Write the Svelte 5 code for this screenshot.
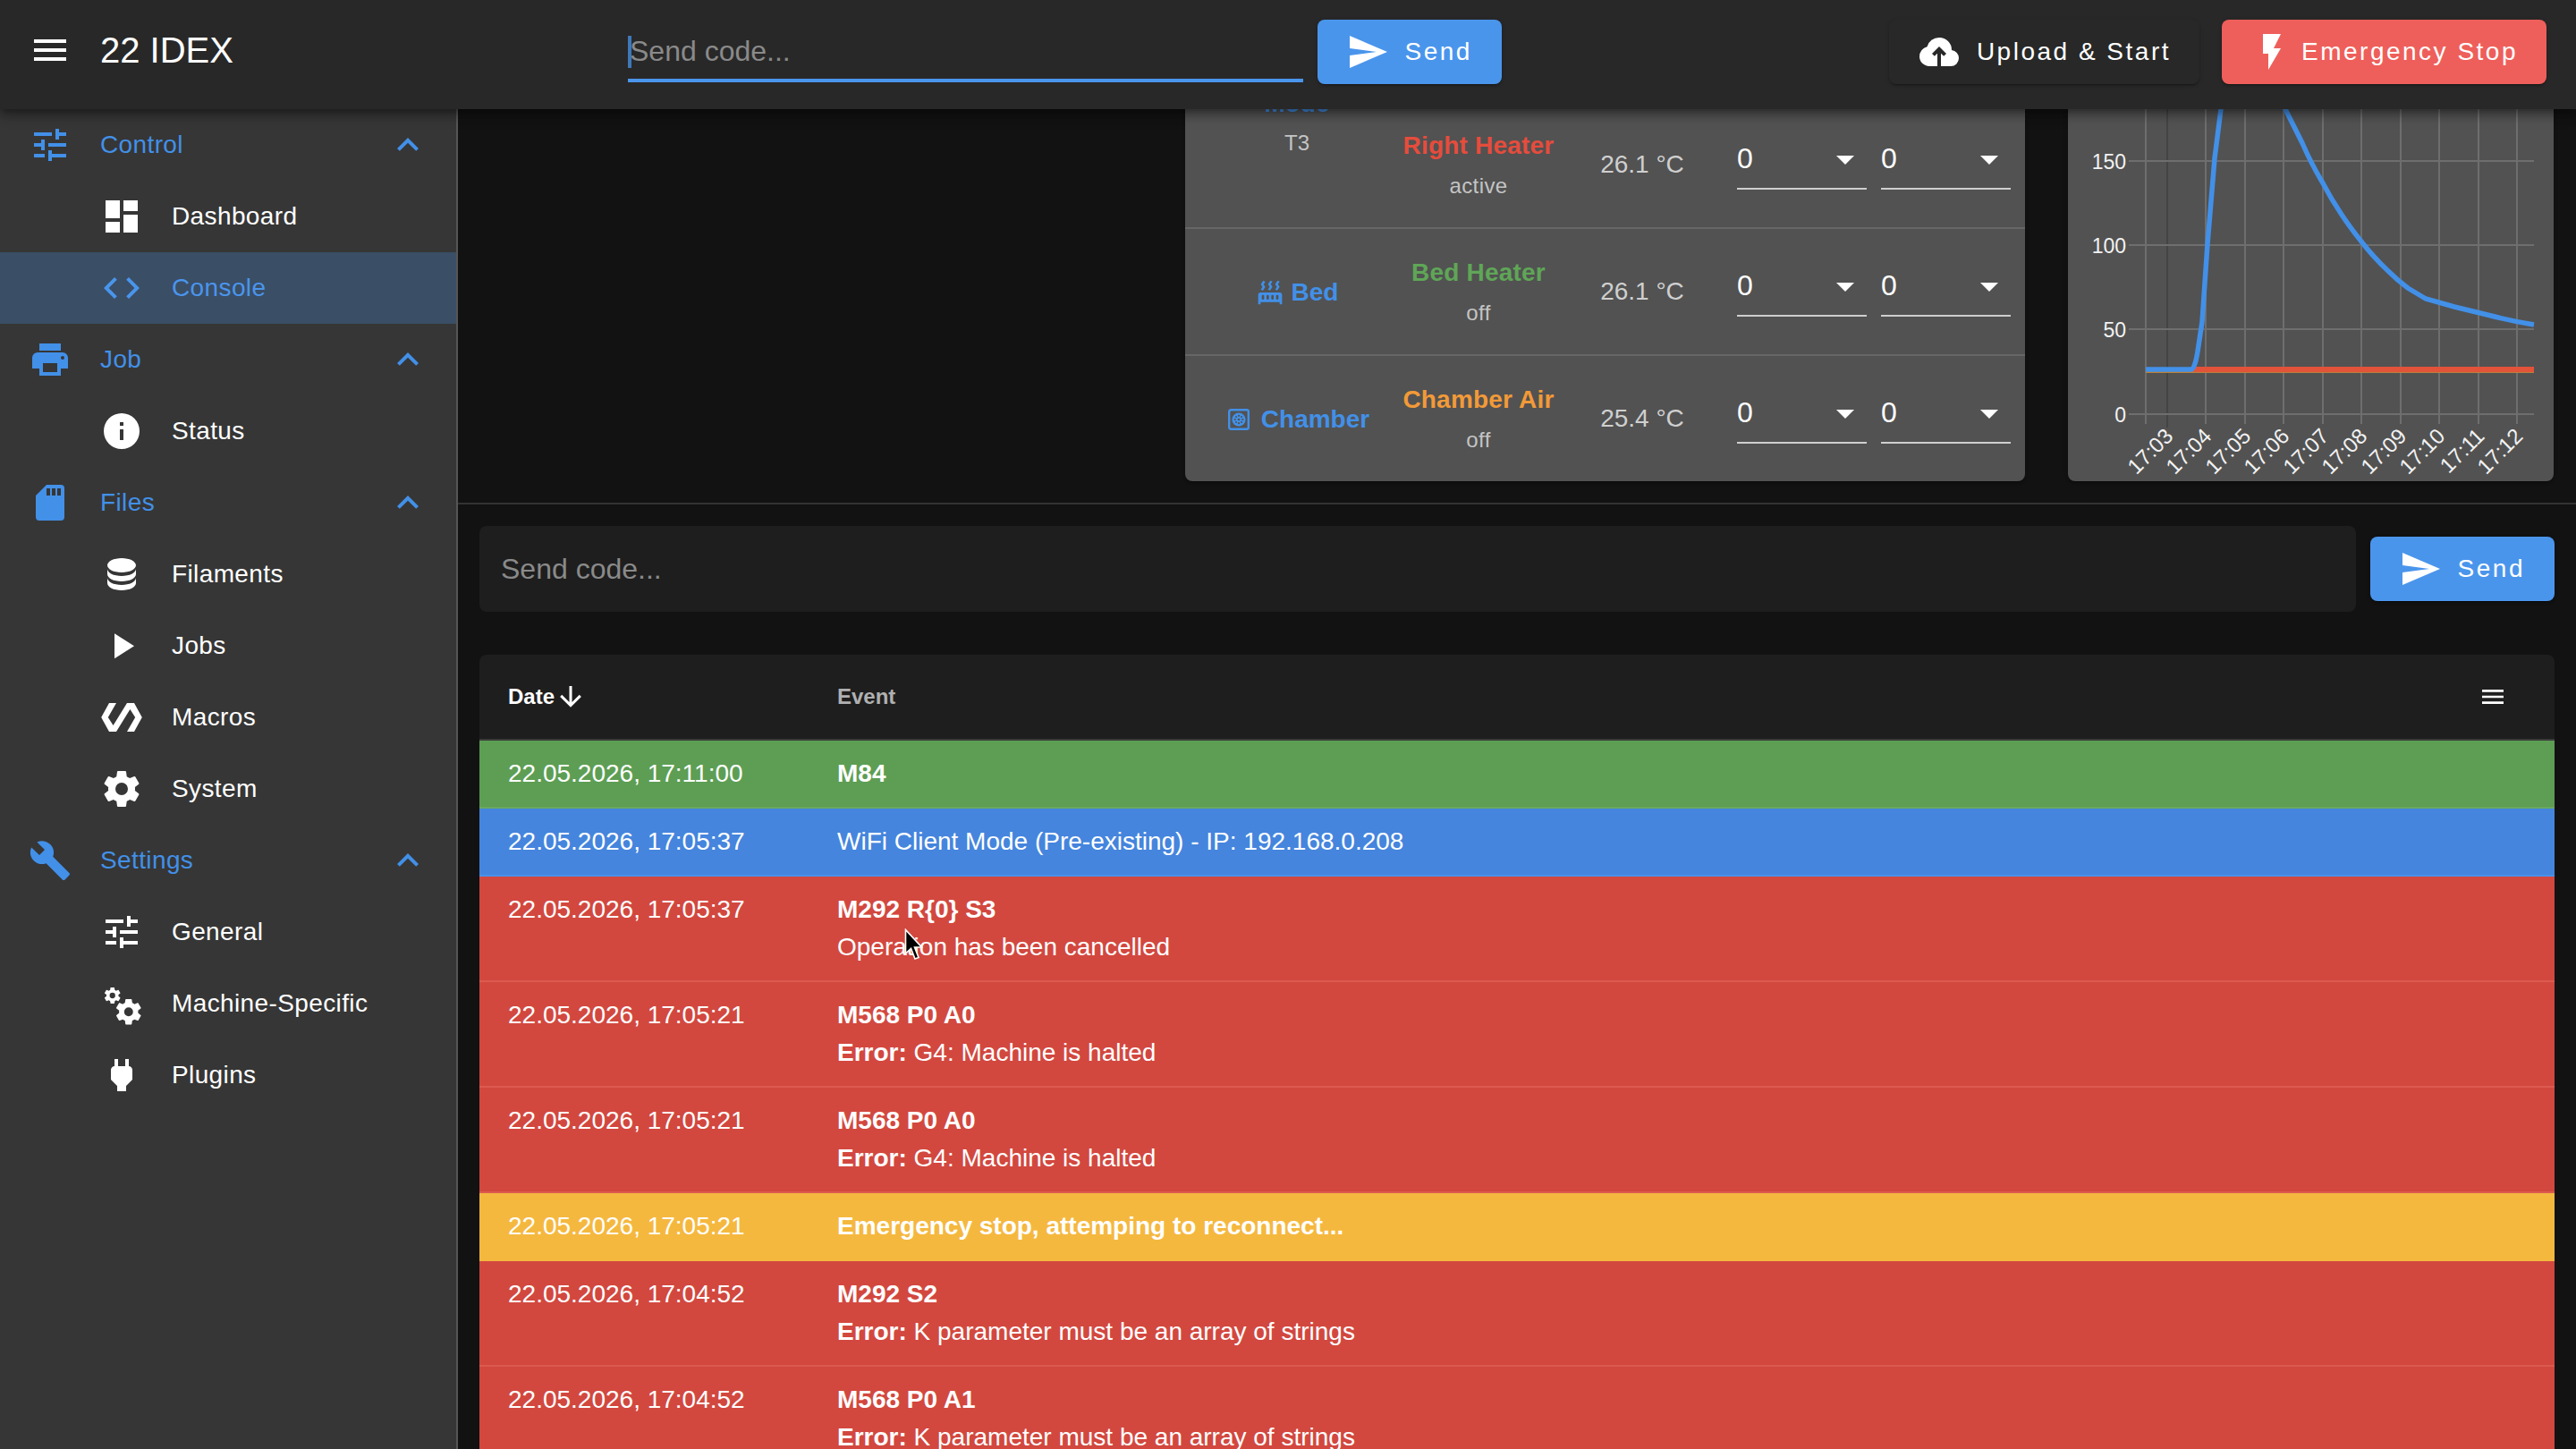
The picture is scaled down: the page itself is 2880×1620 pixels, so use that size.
<script>
  const icons = {
    menu: 'M3,6H21V8H3V6M3,11H21V13H3V11M3,16H21V18H3V16Z',
    send: 'M2,21L23,12L2,3V10L17,12L2,14V21Z',
    upload: 'M11 20H6.5Q4.22 20 2.61 18.43 1 16.85 1 14.58 1 12.63 2.17 11.1 3.35 9.57 5.25 9.15 5.88 6.85 7.75 5.43 9.63 4 12 4 14.93 4 16.96 6.04 19 8.07 19 11 20.73 11.2 21.86 12.5 23 13.78 23 15.5 23 17.38 21.69 18.69 20.38 20 18.5 20H13V12.85L14.6 14.4L16 13L12 9L8 13L9.4 14.4L11 12.85Z',
    flash: 'M7,2V13H10V22L17,10H13L17,2H7Z',
    tune: 'M3,17V19H9V17H3M3,5V7H13V5H3M13,21V19H21V17H13V15H11V21H13M7,9V11H3V13H7V15H9V9H7M21,13V11H11V13H21M15,9H17V7H21V5H17V3H15V9Z',
    dashboard: 'M13,3V9H21V3M13,21H21V11H13M3,21H11V15H3M3,13H11V3H3V13Z',
    code: 'M14.6,16.6L19.2,12L14.6,7.4L16,6L22,12L16,18L14.6,16.6M9.4,16.6L4.8,12L9.4,7.4L8,6L2,12L8,18L9.4,16.6Z',
    printer: 'M18,3H6V7H18M19,12A1,1 0 0,1 18,11A1,1 0 0,1 19,10A1,1 0 0,1 20,11A1,1 0 0,1 19,12M16,19H8V14H16M19,8H5A3,3 0 0,0 2,11V17H6V21H18V17H22V11A3,3 0 0,0 19,8Z',
    info: 'M13,9H11V7H13M13,17H11V11H13M12,2A10,10 0 0,0 2,12A10,10 0 0,0 12,22A10,10 0 0,0 22,12A10,10 0 0,0 12,2Z',
    sd: 'M18,8H16V4H18M15,8H13V4H15M12,8H10V4H12M18,2H10L4,8V20A2,2 0 0,0 6,22H18A2,2 0 0,0 20,20V4A2,2 0 0,0 18,2Z',
    database: 'M12,3C7.58,3 4,4.79 4,7C4,9.21 7.58,11 12,11C16.42,11 20,9.21 20,7C20,4.79 16.42,3 12,3M4,9V12C4,14.21 7.58,16 12,16C16.42,16 20,14.21 20,12V9C20,11.21 16.42,13 12,13C7.58,13 4,11.21 4,9M4,14V17C4,19.21 7.58,21 12,21C16.42,21 20,19.21 20,17V14C20,16.21 16.42,18 12,18C7.58,18 4,16.21 4,14Z',
    play: 'M8,5.14V19.14L19,12.14L8,5.14Z',
    polymer: 'M19,4H15L7.29,16.51L4.41,12L9,4H5L0.6,12L5,20H9L16.71,7.49L19.59,12L15,20H19L23.4,12L19,4Z',
    cog: 'M12,15.5A3.5,3.5 0 0,1 8.5,12A3.5,3.5 0 0,1 12,8.5A3.5,3.5 0 0,1 15.5,12A3.5,3.5 0 0,1 12,15.5M19.43,12.97C19.47,12.65 19.5,12.33 19.5,12C19.5,11.67 19.47,11.34 19.43,11L21.54,9.37C21.73,9.22 21.78,8.95 21.66,8.73L19.66,5.27C19.54,5.05 19.27,4.96 19.05,5.05L16.56,6.05C16.04,5.66 15.5,5.32 14.87,5.07L14.5,2.42C14.46,2.18 14.25,2 14,2H10C9.75,2 9.54,2.18 9.5,2.42L9.13,5.07C8.5,5.32 7.96,5.66 7.44,6.05L4.95,5.05C4.73,4.96 4.46,5.05 4.34,5.27L2.34,8.73C2.21,8.95 2.27,9.22 2.46,9.37L4.57,11C4.53,11.34 4.5,11.67 4.5,12C4.5,12.33 4.53,12.65 4.57,12.97L2.46,14.63C2.27,14.78 2.21,15.05 2.34,15.27L4.34,18.73C4.46,18.95 4.73,19.03 4.95,18.95L7.44,17.94C7.96,18.34 8.5,18.68 9.13,18.93L9.5,21.58C9.54,21.82 9.75,22 10,22H14C14.25,22 14.46,21.82 14.5,21.58L14.87,18.93C15.5,18.67 16.04,18.34 16.56,17.94L19.05,18.95C19.27,19.03 19.54,18.95 19.66,18.73L21.66,15.27C21.78,15.05 21.73,14.78 21.54,14.63L19.43,12.97Z',
    wrench: 'M22.7,19L13.6,9.9C14.5,7.6 14,4.9 12.1,3C10.1,1 7.1,0.6 4.7,1.7L9,6L6,9L1.6,4.7C0.4,7.1 0.9,10.1 2.9,12.1C4.8,14 7.5,14.5 9.8,13.6L18.9,22.7C19.3,23.1 19.9,23.1 20.3,22.7L22.6,20.4C23.1,20 23.1,19.3 22.7,19Z',
    plug: 'M16,7V3H14V7H10V3H8V7H8C7,7 6,8 6,9V14.5L9.5,18V21H14.5V18L18,14.5V9C18,8 17,7 16,7Z',
    chevron: 'M7.41,15.41L12,10.83L16.59,15.41L18,14L12,8L6,14L7.41,15.41Z',
    arrow: 'M11,4H13V16L18.5,10.5L19.92,11.92L12,19.84L4.08,11.92L5.5,10.5L11,16V4Z',
    radiator: 'M7.95,3L6.53,5.19L7.95,7.4H7.94L5.95,10.5L4.22,9.6L5.64,7.39L4.22,5.19L6.22,2.09L7.95,3M13.95,2.89L12.53,5.1L13.95,7.3L13.94,7.31L11.95,10.4L10.22,9.5L11.64,7.3L10.22,5.1L12.22,2L13.95,2.89M20,2.89L18.56,5.1L20,7.3V7.31L18,10.4L16.25,9.5L17.67,7.3L16.25,5.1L18.25,2L20,2.89M2,22V14A2,2 0 0,1 4,12H20A2,2 0 0,1 22,14V22H20V20H4V22H2M6,14A1,1 0 0,0 5,15V17A1,1 0 0,0 6,18A1,1 0 0,0 7,17V15A1,1 0 0,0 6,14M10,14A1,1 0 0,0 9,15V17A1,1 0 0,0 10,18A1,1 0 0,0 11,17V15A1,1 0 0,0 10,14M14,14A1,1 0 0,0 13,15V17A1,1 0 0,0 14,18A1,1 0 0,0 15,17V15A1,1 0 0,0 14,14M18,14A1,1 0 0,0 17,15V17A1,1 0 0,0 18,18A1,1 0 0,0 19,17V15A1,1 0 0,0 18,14Z'
  }

  const nav = [
    { label: 'Control', icon: 'tune', items: [
      { label: 'Dashboard', icon: 'dashboard' },
      { label: 'Console', icon: 'code', active: true }
    ] },
    { label: 'Job', icon: 'printer', items: [
      { label: 'Status', icon: 'info' }
    ] },
    { label: 'Files', icon: 'sd', items: [
      { label: 'Filaments', icon: 'database' },
      { label: 'Jobs', icon: 'play' },
      { label: 'Macros', icon: 'polymer' },
      { label: 'System', icon: 'cog' }
    ] },
    { label: 'Settings', icon: 'wrench', items: [
      { label: 'General', icon: 'tune' },
      { label: 'Machine-Specific', icon: 'cogs' },
      { label: 'Plugins', icon: 'plug' }
    ] }
  ]

  const heaters = [
    { name: 'Right Heater', state: 'active', temp: '26.1 °C', color: 'red' },
    { name: 'Bed Heater', state: 'off', temp: '26.1 °C', color: 'green' },
    { name: 'Chamber Air', state: 'off', temp: '25.4 °C', color: 'orange' }
  ]

  const events = [
    { kind: 'success', date: '22.05.2026, 17:11:00', title: 'M84' },
    { kind: 'info', date: '22.05.2026, 17:05:37', text: 'WiFi Client Mode (Pre-existing) - IP: 192.168.0.208' },
    { kind: 'error', date: '22.05.2026, 17:05:37', title: 'M292 R{0} S3', text: 'Operation has been cancelled' },
    { kind: 'error', date: '22.05.2026, 17:05:21', title: 'M568 P0 A0', err: 'G4: Machine is halted' },
    { kind: 'error', date: '22.05.2026, 17:05:21', title: 'M568 P0 A0', err: 'G4: Machine is halted' },
    { kind: 'warning', date: '22.05.2026, 17:05:21', title: 'Emergency stop, attemping to reconnect...' },
    { kind: 'error', date: '22.05.2026, 17:04:52', title: 'M292 S2', err: 'K parameter must be an array of strings' },
    { kind: 'error', date: '22.05.2026, 17:04:52', title: 'M568 P0 A1', err: 'K parameter must be an array of strings' }
  ]

  // chart is drawn in page coordinates, the viewBox is the card rectangle
  const ticks = [
    [2423, '17:03'], [2466, '17:04'], [2510, '17:05'], [2553, '17:06'], [2597, '17:07'],
    [2640, '17:08'], [2684, '17:09'], [2727, '17:10'], [2771, '17:11'], [2814, '17:12']
  ]
  const gridX = [2399, 2466, 2510, 2553, 2597, 2640, 2684, 2727, 2771, 2814]
  const gridY = [[180, '150'], [274, '100'], [368, '50'], [463, '0']]
  const bluePath = 'M2399,413 L2450,413 Q2454,412 2457,393 L2462,360 L2468,273 L2476,177 L2483,122 L2492,40 M2538,40 L2555,122 L2574,160 Q2584,183 2596,203 Q2606,222 2618,240 Q2628,255 2640,270 Q2654,288 2670,303 Q2680,313 2692,322 L2712,334 L2744,343 L2781,352 Q2808,359 2833,363'
</script>

{#snippet icon(name, size = 48)}
  <svg class="icon" width={size} height={size} viewBox="0 0 24 24" aria-hidden="true">
    {#if name === 'cogs'}
      <path transform="translate(1.46 2.1) scale(0.45)" d={icons.cog} />
      <path transform="translate(7.37 8.08) scale(0.71)" d={icons.cog} />
    {:else}
      <path d={icons[name]} />
    {/if}
  </svg>
{/snippet}

<div class="app">
  <header class="toolbar">
    <button class="nav-toggle" aria-label="Menu">{@render icon('menu')}</button>
    <div class="title">22 IDEX</div>
    <div class="code-input">
      <span class="caret"></span>
      <input placeholder="Send code..." />
    </div>
    <button class="btn primary">{@render icon('send')}<span>Send</span></button>
    <button class="btn upload">{@render icon('upload')}<span>Upload &amp; Start</span></button>
    <button class="btn stop">{@render icon('flash')}<span>Emergency Stop</span></button>
  </header>

  <div class="body">
    <nav class="sidebar">
      {#each nav as group}
        <div class="group-row">
          {@render icon(group.icon)}
          <span class="group-label">{group.label}</span>
          <span class="chevron">{@render icon('chevron')}</span>
        </div>
        {#each group.items as item}
          <div class="item-row" class:active={item.active}>
            <span class="item-icon">{@render icon(item.icon)}</span>
            <span>{item.label}</span>
          </div>
        {/each}
      {/each}
    </nav>

    <main class="main">
      <section class="top">
        <div class="card tools">
          {#each heaters as h, i}
            <div class="tool-row" class:first={i === 0}>
              <div class="tool-cell">
                {#if i === 0}
                  <div class="tool-stack">
                    <div class="tool-name">Mode</div>
                    <div class="tool-sel">T3</div>
                  </div>
                {:else if i === 1}
                  <span class="tool-name with-icon bed">{@render icon('radiator', 32)}Bed</span>
                {:else}
                  <span class="tool-name with-icon chamber">
                    <svg class="icon" width="24" height="24" viewBox="0 0 24 24" aria-hidden="true">
                      <rect x="1.2" y="1.2" width="21.6" height="21.6" rx="2" fill="none" stroke="currentColor" stroke-width="2.4" />
                      <circle cx="12" cy="12" r="7.6" />
                      <g fill="#525252">
                        <circle cx="12" cy="12" r="1.3" />
                        <circle cx="12" cy="7.8" r="1.1" />
                        <circle cx="12" cy="16.2" r="1.1" />
                        <circle cx="7.8" cy="12" r="1.1" />
                        <circle cx="16.2" cy="12" r="1.1" />
                        <circle cx="9" cy="9" r="1" />
                        <circle cx="15" cy="9" r="1" />
                        <circle cx="9" cy="15" r="1" />
                        <circle cx="15" cy="15" r="1" />
                      </g>
                    </svg>Chamber
                  </span>
                {/if}
              </div>
              <div class="heater-cell">
                <div class="heater-name {h.color}">{h.name}</div>
                <div class="heater-state">{h.state}</div>
              </div>
              <div class="temp-cell">{h.temp}</div>
              <div class="select-cell">
                <div class="fake-select"><span>0</span><i class="drop"></i></div>
                <div class="fake-select"><span>0</span><i class="drop"></i></div>
              </div>
            </div>
          {/each}
        </div>

        <div class="card chart">
          <svg width="543" height="446" viewBox="2312 92 543 446" role="img" aria-label="Temperature chart">
            {#each gridX as x}
              <line x1={x} y1="90" x2={x} y2="474" stroke="#6e6e6e" stroke-width="2" />
            {/each}
            <line x1="2423" y1="90" x2="2423" y2="478" stroke="#444" stroke-width="2" />
            {#each gridY as [y, label]}
              <line x1="2380" y1={y} x2="2833" y2={y} stroke="#6e6e6e" stroke-width="2" />
              <text class="axis" x="2377" y={y + 9} text-anchor="end">{label}</text>
            {/each}
            <line x1="2399" y1="416" x2="2833" y2="416" stroke="#b9813a" stroke-width="2" />
            <line x1="2452" y1="413" x2="2833" y2="413" stroke="#e2533a" stroke-width="6" />
            <path d={bluePath} fill="none" stroke="#4290e8" stroke-width="5.5" />
            {#each ticks as [x, label]}
              <text class="axis tick" transform="translate({x + 8} 489) rotate(-45)" text-anchor="end">{label}</text>
            {/each}
          </svg>
        </div>
      </section>

      <div class="divider"></div>

      <section class="send-row">
        <input class="send-input" placeholder="Send code..." />
        <button class="btn primary">{@render icon('send')}<span>Send</span></button>
      </section>

      <section class="events">
        <div class="events-head">
          <div class="head-date">Date{@render icon('arrow', 36)}</div>
          <div class="head-event">Event</div>
          <div class="head-menu">{@render icon('menu', 32)}</div>
        </div>
        {#each events as ev}
          <div class="event {ev.kind}">
            <div class="event-date">{ev.date}</div>
            <div class="event-body">
              {#if ev.title}<div class="bold">{ev.title}</div>{/if}
              {#if ev.text}<div>{ev.text}</div>{/if}
              {#if ev.err}<div><span class="bold">Error:</span> {ev.err}</div>{/if}
            </div>
          </div>
        {/each}
      </section>
    </main>
  </div>

  <svg class="cursor" width="22" height="37" viewBox="0 0 22 37" aria-hidden="true">
    <path d="M1.5,1.5 V28 L7.5,22.5 L12,34 L16,32.5 L11.5,21 H19.5 Z" fill="#000" stroke="#fff" stroke-width="1.6" />
  </svg>
</div>

<style>
  :global(body) {
    margin: 0;
    background: #121212;
    font-family: "Liberation Sans", Arial, sans-serif;
    color: #fff;
  }

  .app {
    position: relative;
    width: 2880px;
    height: 1620px;
    display: flex;
    flex-direction: column;
    overflow: hidden;
    font-size: 28px;
  }

  .icon {
    display: block;
    flex: none;
    fill: currentColor;
  }

  button {
    font: inherit;
    border: none;
    color: inherit;
    background: none;
    cursor: pointer;
  }

  /* toolbar */
  .toolbar {
    position: relative;
    z-index: 3;
    flex: 0 0 122px;
    box-sizing: border-box;
    display: flex;
    align-items: center;
    padding: 0 33px 6px 32px;
    background: #282828;
    box-shadow: 0 4px 8px -2px rgba(0, 0, 0, 0.3), 0 8px 10px 0 rgba(0, 0, 0, 0.2), 0 2px 20px 0 rgba(0, 0, 0, 0.15);
  }

  .nav-toggle {
    padding: 0;
    width: 48px;
    height: 48px;
    margin-top: -4px;
  }

  .title {
    width: 590px;
    margin: -4px 0 0 32px;
    font-size: 40px;
    line-height: 48px;
  }

  .code-input {
    position: relative;
    width: 755px;
    margin-right: 16px;
  }

  .code-input input {
    display: block;
    width: 100%;
    box-sizing: border-box;
    height: 68px;
    padding: 2px 0 0 2px;
    font: inherit;
    font-size: 32px;
    color: #fff;
    background: none;
    border: none;
    border-bottom: 4px solid #4a95ec;
    outline: none;
  }

  .code-input input::placeholder,
  .send-input::placeholder {
    color: #8a8a8a;
    opacity: 1;
  }

  .caret {
    position: absolute;
    left: 0;
    top: 16px;
    width: 4px;
    height: 36px;
    background: #3f78b8;
  }

  .btn {
    flex: none;
    display: flex;
    align-items: center;
    gap: 18px;
    height: 72px;
    padding: 0 33px 0 31.5px;
    border-radius: 8px;
    font-size: 28px;
    letter-spacing: 2.5px;
    color: #fff;
    box-shadow: 0 3px 1px -2px rgba(0, 0, 0, 0.2), 0 2px 2px 0 rgba(0, 0, 0, 0.14), 0 1px 5px 0 rgba(0, 0, 0, 0.12);
  }

  .btn.primary {
    background: #4a95ec;
  }

  .btn.upload {
    margin-left: auto;
    margin-right: 25px;
    padding: 0 32px;
    background: #282828;
  }

  .btn.stop {
    gap: 9px;
    padding: 0 32px;
    background: #ee5f5b;
  }

  .body {
    flex: 1;
    display: flex;
    min-height: 0;
  }

  /* sidebar */
  .sidebar {
    flex: 0 0 510px;
    background: #363636;
    border-right: 2px solid #555;
    letter-spacing: 0.38px;
  }

  .group-row,
  .item-row {
    display: flex;
    align-items: center;
    height: 80px;
  }

  .group-row {
    padding: 0 30px 0 32px;
    color: #4290e8;
  }

  .group-label {
    margin-left: 32px;
  }

  .chevron {
    margin-left: auto;
  }

  .item-row {
    padding-left: 112px;
    color: #fff;
  }

  .item-icon {
    margin-right: 32px;
  }

  .item-row.active {
    background: #3a4e66;
    color: #4a95ec;
  }

  /* main */
  .main {
    flex: 1;
    min-width: 0;
    overflow: hidden;
    background: #121212;
  }

  .top {
    display: flex;
    gap: 48px;
    margin-top: -30px;
    padding-left: 813px;
  }

  .card {
    background: #525252;
    border-radius: 0 0 8px 8px;
    box-shadow: 0 3px 1px -2px rgba(0, 0, 0, 0.2), 0 2px 2px 0 rgba(0, 0, 0, 0.14), 0 1px 5px 0 rgba(0, 0, 0, 0.12);
  }

  .tools {
    width: 939px;
  }

  .tool-row {
    display: grid;
    grid-template-columns: 230px 172px 196px 1fr;
    align-items: center;
    height: 142px;
    box-sizing: border-box;
    padding-left: 12px;
    border-bottom: 2px solid #666;
  }

  .tool-row.first {
    height: 164px;
    padding-top: 22px;
  }

  .tool-row:last-child {
    height: 140px;
    border-bottom: none;
  }

  .tool-cell {
    display: flex;
    justify-content: center;
    text-align: center;
    padding: 2px 4px 0 0;
  }

  .tool-stack {
    align-self: flex-start;
  }

  .tool-row.first .tool-cell {
    align-self: start;
    margin-top: -20px;
    padding-top: 0;
  }

  .tool-name {
    font-weight: bold;
    line-height: 42px;
    color: #4290e8;
    white-space: nowrap;
  }

  .tool-stack .tool-name {
    margin-top: 1px;
  }

  .tool-sel {
    margin-top: 2px;
    font-size: 24px;
    line-height: 42px;
    color: #c4c4c4;
  }

  .with-icon {
    display: inline-flex;
    align-items: center;
  }

  .bed {
    gap: 8px;
  }

  .chamber {
    gap: 13px;
    margin-left: 4px;
  }

  .heater-cell {
    display: flex;
    flex-direction: column;
    align-items: center;
    padding-top: 3px;
    white-space: nowrap;
  }

  .heater-name {
    font-weight: bold;
    line-height: 42px;
    letter-spacing: 0.2px;
  }

  .heater-name.red { color: #e64c3c; }
  .heater-name.green { color: #5fa657; }
  .heater-name.orange { color: #f29a38; }

  .heater-state {
    margin-top: 3px;
    font-size: 24px;
    line-height: 42px;
    letter-spacing: 0.4px;
    color: #c4c4c4;
  }

  .temp-cell {
    text-align: center;
    padding-right: 2px;
    color: #cfcfcf;
  }

  .select-cell {
    display: flex;
    gap: 16px;
    padding-left: 7px;
  }

  .fake-select {
    display: flex;
    align-items: center;
    justify-content: space-between;
    box-sizing: border-box;
    width: 145px;
    height: 72px;
    margin-bottom: 16px;
    padding: 5px 14px 0 0;
    border-bottom: 2px solid #cfcfcf;
    font-size: 32px;
  }

  .drop {
    width: 0;
    height: 0;
    margin-top: 2px;
    border-left: 10px solid transparent;
    border-right: 10px solid transparent;
    border-top: 10px solid #fff;
  }

  .chart {
    width: 543px;
    height: 446px;
  }

  .chart svg {
    display: block;
  }

  .axis {
    font-size: 23px;
    fill: #f2f2f2;
  }

  .axis.tick {
    font-size: 24px;
  }

  .divider {
    height: 2px;
    margin-top: 24px;
    background: #333;
  }

  .send-row {
    display: flex;
    align-items: center;
    gap: 16px;
    padding: 24px 24px 0;
  }

  .send-input {
    flex: 1;
    min-width: 0;
    height: 96px;
    box-sizing: border-box;
    padding: 0 24px;
    font: inherit;
    font-size: 32px;
    color: #fff;
    background: #1e1e1e;
    border: none;
    border-radius: 8px;
    outline: none;
  }

  /* event table */
  .events {
    margin: 48px 24px 0;
    border-radius: 8px 8px 0 0;
    overflow: hidden;
    background: #1e1e1e;
  }

  .events-head {
    display: grid;
    grid-template-columns: 368px 1fr auto;
    align-items: center;
    height: 94px;
    border-bottom: 2px solid #3a3a3a;
    font-size: 24px;
    font-weight: bold;
  }

  .head-date {
    display: flex;
    align-items: center;
    padding-left: 32px;
    line-height: 36px;
  }

  .head-event {
    padding-left: 32px;
    color: #b0b0b0;
  }

  .head-menu {
    padding-right: 53px;
  }

  .event {
    display: grid;
    grid-template-columns: 368px 1fr;
    box-sizing: border-box;
    padding: 16px 0;
    line-height: 42px;
    border-bottom: 2px solid transparent;
  }

  .event-date {
    padding-left: 32px;
  }

  .event-body {
    padding-left: 32px;
  }

  .bold {
    font-weight: bold;
  }

  .event.success { background: #5d9e54; border-color: #6aa860; }
  .event.info { background: #4585dd; border-color: #4a92ea; }
  .event.error { background: #d2483f; border-color: #dc5a50; }
  .event.warning { background: #f5b83f; border-color: #f5b83f; }

  .cursor {
    position: absolute;
    left: 1011px;
    top: 1038px;
  }
</style>
